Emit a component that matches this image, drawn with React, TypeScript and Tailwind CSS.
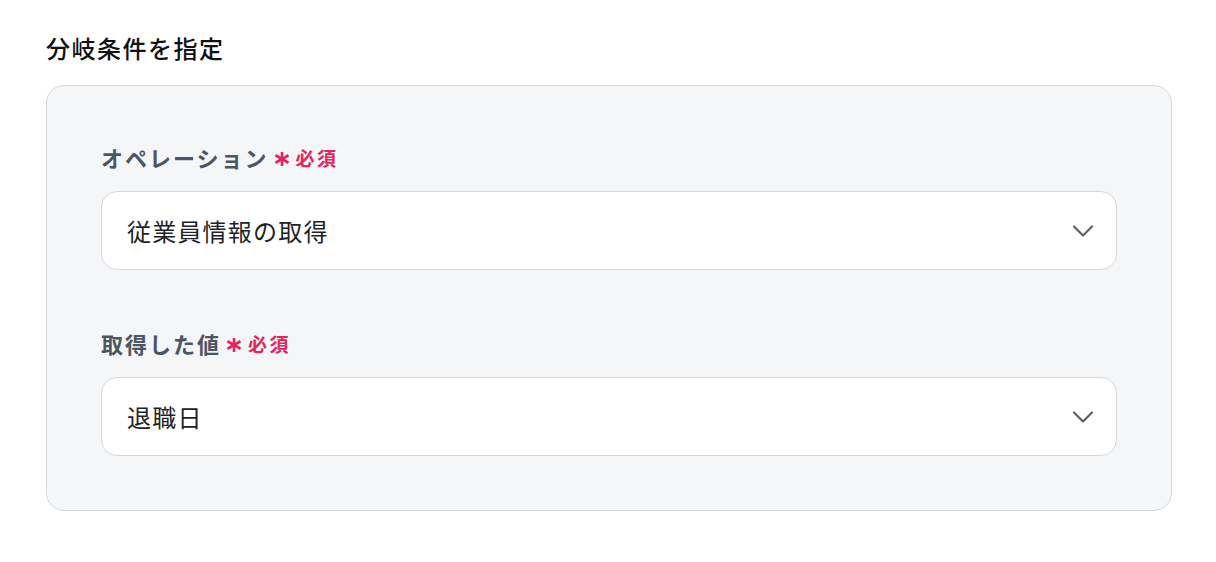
import React from "react";

const font = { fontFamily: '"Noto Sans CJK JP", "Noto Sans", sans-serif' };

function Chevron() {
  return (
    <svg width="22" height="14" viewBox="0 0 22 14" fill="none">
      <path d="M2 2.5l9 9 9-9" stroke="#616161" strokeWidth="2.2" strokeLinecap="round" strokeLinejoin="round" />
    </svg>
  );
}

function Asterisk() {
  return (
    <svg width="16" height="16" viewBox="0 0 16 16" fill="none" className="mt-[4px]">
      <g stroke="#e5255a" strokeWidth="2.6" strokeLinecap="butt">
        <path d="M8 1v14" />
        <path d="M1.5 4.25l13 7.5" />
        <path d="M1.5 11.75l13-7.5" />
      </g>
    </svg>
  );
}

function Field({ label, value }: { label: string; value: string }) {
  return (
    <div className="flex flex-col">
      <div className="flex items-center h-[28px]">
        <span className="text-[22px] font-bold text-[#4b5563] leading-none tracking-[2px]">{label}</span>
        <span className="ml-[5px] flex items-center">
          <Asterisk />
        </span>
        <span className="ml-[6px] text-[#e5255a] text-[19px] font-bold leading-none tracking-[2.5px]">必須</span>
      </div>
      <div className="mt-[20px] h-[79px] bg-white border border-[#d4d7dd] rounded-[16px] flex items-center justify-between pl-[25px] pr-[22px]">
        <span className="text-[24px] text-[#1f2328] leading-none tracking-[1.2px]">{value}</span>
        <Chevron />
      </div>
    </div>
  );
}

export default function App() {
  return (
    <div className="w-[1216px] h-[562px] bg-white" style={font}>
      <div className="pl-[46px] pr-[44px] pt-[34px]">
        <h2 className="text-[24px] font-medium text-[#111111] leading-none h-[28px] flex items-center tracking-[1.5px]">分岐条件を指定</h2>
        <div className="mt-[23px] bg-[#f5f6f8] border border-[#d4d7dd] rounded-[18px] px-[54px] pt-[57px] pb-[54px] flex flex-col gap-[59px]">
          <Field label="オペレーション" value="従業員情報の取得" />
          <Field label="取得した値" value="退職日" />
        </div>
      </div>
    </div>
  );
}
